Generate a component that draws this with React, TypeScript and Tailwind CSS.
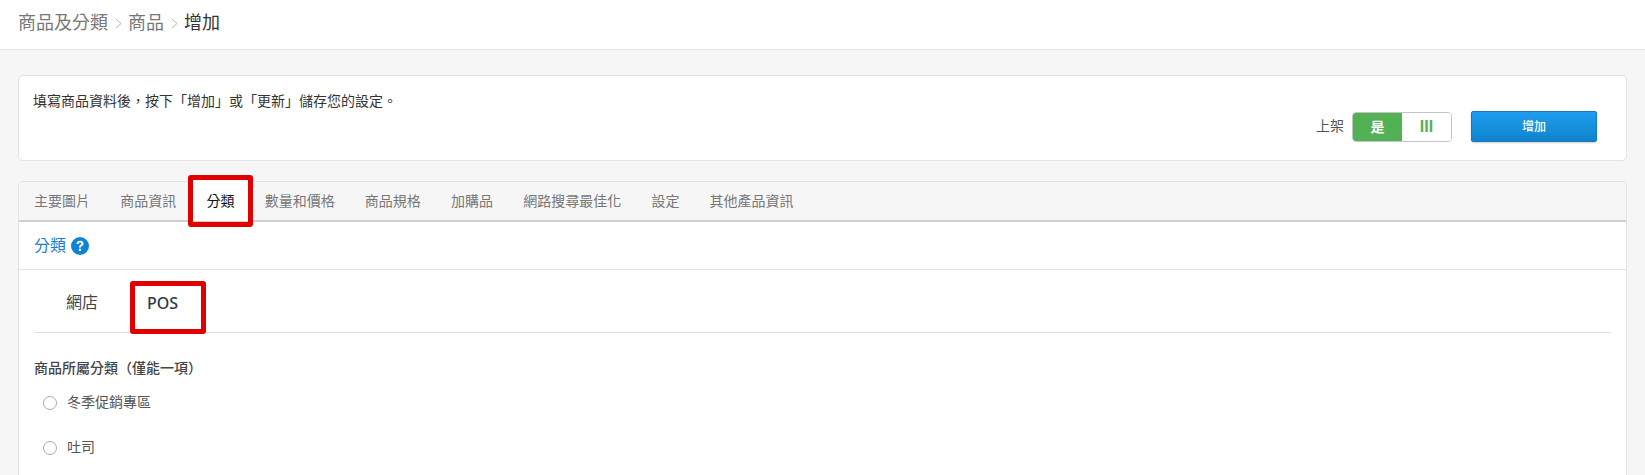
const tabs = ['主要圖片', '商品資訊', '分類', '數量和價格', '商品規格', '加購品', '網路搜尋最佳化', '設定', '其他產品資訊'];

function RedBox({ className }: { className: string }) {
  return <span className={`pointer-events-none absolute rounded-[3px] border-[#e00000] ${className}`} aria-hidden />;
}

function Chevron() {
  return (
    <span className="mx-[6.5px] text-[#b5b5b5]">
      <svg width="7" height="11" viewBox="0 0 7 11" fill="none" stroke="currentColor" strokeWidth="1"><path d="M1 1l5 4.5L1 10" /></svg>
    </span>
  );
}

function Radio({ label }: { label: string }) {
  return (
    <label className="flex h-[45px] items-center pl-[9px] text-[14px] text-[#555]">
      <span className="mr-[10px] h-[14px] w-[14px] rounded-full border border-[#aaa] bg-white" />
      {label}
    </label>
  );
}

export default function App() {
  return (
    <div className="h-[475px] overflow-hidden bg-[#f6f6f6] font-['Liberation_Sans','Noto_Sans_CJK_TC',sans-serif]">
      <header className="flex h-[50px] items-center border-b border-[#e3e3e3] bg-white pb-[2px] pl-[18px] text-[18px] text-[#777]">
        <span>商品及分類</span>
        <Chevron />
        <span>商品</span>
        <Chevron />
        <span className="text-[#333]">增加</span>
      </header>

      <div className="pl-[18px] pr-[18px] pt-[25px]">
        <section className="flex h-[86px] justify-between rounded-[5px] border border-[#e3e3e3] bg-white pl-[14px] pr-[29px]">
          <p className="pt-[15px] text-[14px] leading-[20px] text-[#333]">填寫商品資料後，按下「增加」或「更新」儲存您的設定。</p>
          <div className="flex items-start pt-[35px]">
            <span className="mr-[8px] mt-[6px] text-[14px] leading-[18px] text-[#555]">上架</span>
            <div className="mt-[1px] flex h-[30px] w-[100px] overflow-hidden rounded-[4px] border border-[#c4c4c4] text-[14px] font-bold">
              <span className="flex w-[49px] items-center justify-center bg-[#53b155] text-white">是</span>
              <span className="flex flex-1 items-center justify-center bg-white font-['Liberation_Sans'] text-[16px] text-[#53b155]">III</span>
            </div>
            <button className="ml-[19px] flex h-[31px] w-[126px] items-center justify-center rounded-[2px] border border-[#1a78bb] bg-gradient-to-b from-[#1e9df0] to-[#0f84cc] text-[12px] font-medium text-white shadow-[0_1px_2px_rgba(0,0,0,0.2)]">
              增加
            </button>
          </div>
        </section>

        <section className="mt-[20px] h-[320px] rounded-t-[5px] border border-b-0 border-[#e3e3e3] bg-white">
          <nav className="flex h-[40px] items-center rounded-t-[5px] border-b-2 border-[#cfcfcf] bg-[#f6f6f6]">
            {tabs.map(tab => {
              const active = tab === '分類';
              return (
                <span key={tab} className={`relative flex h-[40px] items-center px-[15.1px] pt-[1px] text-[14px] ${active ? 'bg-white text-[#111]' : 'text-[#777]'}`}>
                  {tab}
                  {active && <RedBox className="-bottom-[6px] -left-[3px] -right-[3px] -top-[6px] border-[5px]" />}
                </span>
              );
            })}
          </nav>

          <h2 className="flex h-[48px] items-center border-b border-[#e3e3e3] pl-[15px] text-[16px] text-[#1b7fd0]">
            分類
            <svg className="ml-[5px]" width="18" height="18" viewBox="0 0 18 18">
              <circle cx="9" cy="9" r="9" fill="#0f84d4" />
              <path d="M5.6 6.9C5.7 4.9 7.1 3.7 9.2 3.7c2 0 3.4 1.2 3.4 2.9 0 1.2-.6 1.9-1.6 2.5-.8.5-1 .8-1 1.5H7.9c0-1.3.4-2 1.3-2.6.7-.4 1.1-.8 1.1-1.4 0-.7-.5-1.1-1.2-1.1-.8 0-1.3.5-1.4 1.4H5.6z" fill="#fff" />
              <rect x="7.9" y="11.7" width="2.2" height="2.2" fill="#fff" />
            </svg>
          </h2>

          <div className="px-[15px]">
            <div className="flex h-[63px] items-center border-b border-[#e0e0e0] pt-[3px] text-[16px] text-[#444]">
              <span className="w-[113px] pl-[32px]">網店</span>
              <span className="relative font-['Noto_Sans'] text-[16px] font-medium leading-[22px] text-[#2d3a4a]">
                POS
                <RedBox className="-bottom-[20px] -left-[17px] -right-[28px] -top-[10.5px] border-[5px]" />
              </span>
            </div>
            <h3 className="mt-[25px] text-[14px] font-medium leading-[20px] text-[#444]">商品所屬分類（僅能一項）</h3>
            <div className="mt-[2px]">
              <Radio label="冬季促銷專區" />
              <Radio label="吐司" />
            </div>
          </div>
        </section>
      </div>
    </div>
  );
}
